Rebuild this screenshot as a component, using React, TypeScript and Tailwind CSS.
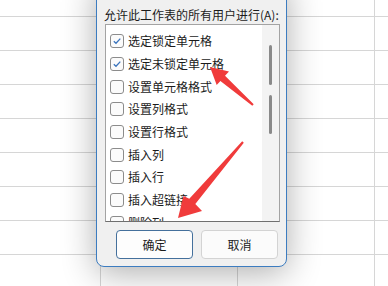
const items = [
  { label: "选定锁定单元格", checked: true },
  { label: "选定未锁定单元格", checked: true },
  { label: "设置单元格格式", checked: false },
  { label: "设置列格式", checked: false },
  { label: "设置行格式", checked: false },
  { label: "插入列", checked: false },
  { label: "插入行", checked: false },
  { label: "插入超链接", checked: false },
  { label: "删除列", checked: false },
];

const Checkbox = ({ checked }: { checked: boolean }) => (
  <span className="flex h-[14px] w-[14px] shrink-0 items-center justify-center rounded-[3px] border border-[#8c8c8c] bg-[#fbfbfb]">
    {checked && (
      <svg width="10" height="10" viewBox="0 0 10 10">
        <path d="M1.8 5.2 L4 7.3 L8.3 2.6" fill="none" stroke="#3b74bd" strokeWidth="1.3" />
      </svg>
    )}
  </span>
);

const Sheet = () => (
  <div className="flex flex-col">
    <div className="flex h-[17px] border-b border-[#d6d6d6]">
      <div className="w-[101px] border-r border-[#d6d6d6]" />
      <div className="w-[137px] border-r border-[#d6d6d6]" />
      <div className="w-[137px] border-r border-[#d6d6d6]" />
    </div>
    {Array.from({ length: 8 }).map((_, i) => (
      <div key={i} className="flex h-[34px] border-b border-[#d6d6d6]">
        <div className="w-[101px] border-r border-[#d6d6d6]" />
        <div className="w-[137px] border-r border-[#d6d6d6]" />
        <div className="w-[137px] border-r border-[#d6d6d6]" />
      </div>
    ))}
  </div>
);

export default function App() {
  return (
    <div
      className="relative h-[286px] w-[388px] overflow-hidden bg-white text-[12px] text-[#1b1b1b]"
      style={{ fontFamily: '"Noto Sans CJK SC", "Noto Sans", sans-serif' }}
    >
      <Sheet />

      {/* dialog window */}
      <div className="absolute left-[96px] top-[-20px] flex h-[287px] w-[191px] flex-col rounded-b-[8px] border border-[#3c7cc0] bg-[#f0f0f0] shadow-[0_6px_34px_rgba(0,0,0,0.32)]">
        <div className="mt-[25px] pl-[7px] leading-[18px]">允许此工作表的所有用户进行(A):</div>
        <div className="ml-[8px] flex h-[198px] w-[175px] border border-[#a3a3a3] border-b-[#6f6f6f] bg-white">
          <div className="flex flex-1 flex-col overflow-hidden pt-[5px]">
            {items.map((it) => (
              <div key={it.label} className="flex h-[22.7px] shrink-0 items-center gap-[4px] pl-[4px] whitespace-nowrap">
                <Checkbox checked={it.checked} />
                <span className="leading-none">{it.label}</span>
              </div>
            ))}
          </div>
          <div className="flex w-[17px] flex-col items-center bg-[#f3f3f3] pt-[20px]">
            <div className="h-[40px] w-[3px] rounded-full bg-[#8a8a8a]" />
            <div className="mt-[10px] h-[39px] w-[3px] rounded-full bg-[#8a8a8a]" />
          </div>
        </div>
        <div className="mt-[8px] flex gap-[8px] pl-[19px]">
          <button className="h-[29px] w-[77px] rounded-[4px] border border-[#44709c] bg-[#fdfdfd] text-[12px]">
            确定
          </button>
          <button className="h-[29px] w-[77px] rounded-[4px] border border-[#d3d3d3] bg-[#fbfbfb] text-[12px]">
            取消
          </button>
        </div>
      </div>

      {/* annotation arrows */}
      <svg className="pointer-events-none absolute left-0 top-0" width="388" height="286">
        <polygon
          fill="#f03b3b"
          points="210,67 229,71.6 225,75.7 253.7,104.3 252.3,105.7 220.4,80.9 216.7,85"
        />
        <polygon
          fill="#f03b3b"
          points="178,218 183.5,196 189.3,198.7 242.2,141.35 243.8,142.65 195.3,203.9 202,211"
        />
      </svg>
    </div>
  );
}
